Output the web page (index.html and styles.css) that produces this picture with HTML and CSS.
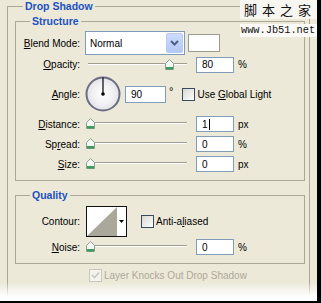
FILE: index.html
```
<!DOCTYPE html>
<html>
<head>
<meta charset="utf-8">
<link rel="stylesheet" href="styles.css">
</head>
<body>
<div class="screen">
  <fieldset class="group outer">
    <legend class="legend outer-legend">Drop Shadow</legend>

    <fieldset class="group inner structure">
      <legend class="legend inner-legend">Structure</legend>

      <div class="row row-blend">
        <span class="label"><u>B</u>lend Mode:</span>
        <div class="select">
          <span class="select-text">Normal</span>
          <span class="select-btn">
            <svg width="9" height="6" viewBox="0 0 9 6"><path d="M1 1 L4.5 4.5 L8 1" fill="none" stroke="#4d6185" stroke-width="2"/></svg>
          </span>
        </div>
        <span class="swatch"></span>
      </div>

      <div class="row row-opacity">
        <span class="label"><u>O</u>pacity:</span>
        <div class="slider">
          <span class="track"></span>
          <span class="thumb" style="left:79px">
            <svg width="9" height="11" viewBox="0 0 9 11"><path d="M0.5 10.5 V4.5 L4.5 0.5 L8.5 4.5 V10.5 Z" fill="#f3f8f3" stroke="#8aa08e"/><rect x="1" y="8" width="7" height="2.5" fill="#3f9a5e"/></svg>
          </span>
        </div>
        <span class="field">80</span>
        <span class="unit">%</span>
      </div>

      <div class="row row-angle">
        <span class="label"><u>A</u>ngle:</span>
        <svg class="dial" width="36" height="36" viewBox="0 0 36 36">
          <defs>
            <radialGradient id="dg" cx="50%" cy="50%" r="50%">
              <stop offset="0" stop-color="#ffffff"/>
              <stop offset="0.6" stop-color="#f2f2f4"/>
              <stop offset="1" stop-color="#e2e2e8"/>
            </radialGradient>
          </defs>
          <circle cx="18" cy="18" r="16.5" fill="url(#dg)" stroke="#6b6d82" stroke-width="2"/>
          <line x1="18" y1="18" x2="18" y2="1.5" stroke="#000" stroke-width="1.2"/>
          <circle cx="18" cy="18" r="1.8" fill="#000"/>
        </svg>
        <span class="field field-angle">90</span>
        <span class="deg">°</span>
        <span class="check"></span>
        <span class="check-label">Use <u>G</u>lobal Light</span>
      </div>

      <div class="row row-slide">
        <span class="label"><u>D</u>istance:</span>
        <div class="slider">
          <span class="track"></span>
          <span class="thumb" style="left:0px">
            <svg width="9" height="11" viewBox="0 0 9 11"><path d="M0.5 10.5 V4.5 L4.5 0.5 L8.5 4.5 V10.5 Z" fill="#f3f8f3" stroke="#8aa08e"/><rect x="1" y="8" width="7" height="2.5" fill="#3f9a5e"/></svg>
          </span>
        </div>
        <span class="field">1<span class="caret"></span></span>
        <span class="unit">px</span>
      </div>

      <div class="row row-slide">
        <span class="label">Sp<u>r</u>ead:</span>
        <div class="slider">
          <span class="track"></span>
          <span class="thumb" style="left:0px">
            <svg width="9" height="11" viewBox="0 0 9 11"><path d="M0.5 10.5 V4.5 L4.5 0.5 L8.5 4.5 V10.5 Z" fill="#f3f8f3" stroke="#8aa08e"/><rect x="1" y="8" width="7" height="2.5" fill="#3f9a5e"/></svg>
          </span>
        </div>
        <span class="field">0</span>
        <span class="unit">%</span>
      </div>

      <div class="row row-slide">
        <span class="label"><u>S</u>ize:</span>
        <div class="slider">
          <span class="track"></span>
          <span class="thumb" style="left:0px">
            <svg width="9" height="11" viewBox="0 0 9 11"><path d="M0.5 10.5 V4.5 L4.5 0.5 L8.5 4.5 V10.5 Z" fill="#f3f8f3" stroke="#8aa08e"/><rect x="1" y="8" width="7" height="2.5" fill="#3f9a5e"/></svg>
          </span>
        </div>
        <span class="field">0</span>
        <span class="unit">px</span>
      </div>
    </fieldset>

    <fieldset class="group inner quality">
      <legend class="legend inner-legend">Quality</legend>

      <div class="row row-contour">
        <span class="label">Contour:</span>
        <div class="contour">
          <svg width="30" height="29" viewBox="0 0 30 29"><rect width="30" height="29" fill="#fff"/><path d="M0 29 L30 0 L30 29 Z" fill="#aaa79b"/></svg>
          <span class="contour-btn">
            <svg width="5" height="3" viewBox="0 0 5 3"><path d="M0 0 H5 L2.5 3 Z" fill="#000"/></svg>
          </span>
        </div>
        <span class="check check-aa"></span>
        <span class="check-label">Anti-a<u>l</u>iased</span>
      </div>

      <div class="row row-noise">
        <span class="label"><u>N</u>oise:</span>
        <div class="slider">
          <span class="track"></span>
          <span class="thumb" style="left:0px">
            <svg width="9" height="11" viewBox="0 0 9 11"><path d="M0.5 10.5 V4.5 L4.5 0.5 L8.5 4.5 V10.5 Z" fill="#f3f8f3" stroke="#8aa08e"/><rect x="1" y="8" width="7" height="2.5" fill="#3f9a5e"/></svg>
          </span>
        </div>
        <span class="field">0</span>
        <span class="unit">%</span>
      </div>
    </fieldset>

    <div class="row row-knock">
      <span class="check check-disabled">
        <svg width="11" height="11" viewBox="0 0 11 11"><path d="M2 5 L4.5 7.5 L9 2.5" fill="none" stroke="#c8c6ba" stroke-width="1.6"/></svg>
      </span>
      <span class="check-label disabled">Layer Knocks Out Drop Shadow</span>
    </div>
  </fieldset>

  <div class="fade"></div>

  <div class="watermark">
    <span class="wm-cn">脚本之家</span>
    <span class="wm-url">www.Jb51.net</span>
  </div>
</div>
</body>
</html>
```

FILE: styles.css
```
* { box-sizing: border-box; }

html, body {
  margin: 0;
  padding: 0;
  background: #ece9d8;
}

body {
  font-family: "Liberation Sans", Arial, sans-serif;
  font-size: 10px;
  color: #000;
}

.screen {
  position: relative;
  width: 321px;
  height: 303px;
  overflow: hidden;
  background: #ece9d8;
  border-right: 4px solid #000;
  border-bottom: 2px solid #000;
  padding-left: 7px;
}

.group {
  margin: 0;
  border: 1px solid #aca899;
  min-width: 0;
}

.outer {
  width: 303px;
  height: 300px;
  border-bottom: none;
  padding: 0 4px 0 7px;
}

.inner {
  padding: 0 0 6px 0;
}

.structure {
  margin-top: 2px;
}

.quality {
  margin-top: 8px;
  padding-bottom: 7px;
}

.legend {
  font-weight: bold;
  color: #2152c3;
  padding: 0 2px;
  background: #ece9d8;
}

.outer-legend {
  font-size: 10.5px;
  line-height: 13px;
  margin-left: 8px;
}

.inner-legend {
  font-size: 10.5px;
  line-height: 12px;
  margin-left: 14px;
}

.row {
  display: flex;
  align-items: center;
  height: 20px;
  white-space: nowrap;
}

.label {
  width: 64px;
  text-align: right;
  margin-right: 6px;
  flex: none;
}

.row-blend { margin-top: 4px; height: 24px; }
.row-opacity { height: 19px; }
.row-angle { height: 40px; }
.row-contour { margin-top: 3px; height: 34px; }
.row-noise { height: 18px; }
.row-knock { margin-top: 5px; height: 13px; padding-left: 74px; }

/* select */
.select {
  display: flex;
  align-items: center;
  width: 100px;
  height: 24px;
  margin-left: -1px;
  background: #fff;
  border: 1px solid #7f9db9;
  padding: 1px;
}
.select-text {
  flex: 1;
  padding-left: 3px;
  font-size: 10px;
}
.select-btn {
  width: 17px;
  height: 20px;
  display: flex;
  align-items: center;
  justify-content: center;
  background: linear-gradient(#cddbfc, #b4c8f6);
  border: 1px solid #b9cbf2;
  border-radius: 2px;
}
.swatch {
  width: 32px;
  height: 18px;
  margin-left: 3px;
  background: #fff;
  border: 1px solid #9c9a8c;
}

/* slider */
.slider {
  position: relative;
  width: 104px;
  height: 12px;
  flex: none;
}
.track {
  position: absolute;
  left: 2px;
  right: 3px;
  top: 4px;
  height: 2px;
  border-top: 1px solid #a09e90;
  border-bottom: 1px solid #fff;
}
.thumb {
  position: absolute;
  top: 0;
  width: 9px;
  height: 11px;
  line-height: 0;
}

.field {
  display: flex;
  align-items: center;
  width: 38px;
  height: 16px;
  margin-left: 6px;
  padding-left: 5px;
  background: #fff;
  border: 1px solid #7f9db9;
  font-size: 10px;
}
.caret {
  display: inline-block;
  width: 1px;
  height: 11px;
  background: #000;
  margin-left: 1px;
}
.unit {
  margin-left: 4px;
}

/* angle */
.dial {
  margin-left: -1px;
  flex: none;
}
.field-angle {
  width: 41px;
  height: 17px;
  margin-left: 4px;
}
.deg {
  margin-left: 3px;
  font-size: 11px;
  align-self: center;
  margin-top: -6px;
}
.check {
  width: 13px;
  height: 13px;
  flex: none;
  border: 1px solid #3b4a60;
  background: linear-gradient(135deg, #d8d8d2, #ffffff);
  display: flex;
  align-items: center;
  justify-content: center;
}
.row-angle .check { margin-left: 9px; }
.check-label { margin-left: 2px; }

/* contour */
.contour {
  display: flex;
  width: 41px;
  height: 31px;
  border: 1px solid #111;
  flex: none;
  line-height: 0;
}
.contour-btn {
  flex: 1;
  background: #fff;
  display: flex;
  align-items: center;
  justify-content: center;
}
.check-aa { margin-left: 14px; }

/* disabled */
.check-disabled {
  border-color: #c9c7ba;
  background: #f4f3ee;
}
.disabled { color: #aca899; }

/* bottom fade */
.fade {
  position: absolute;
  left: 0;
  right: 0;
  top: 282px;
  bottom: 0;
  background: linear-gradient(rgba(255,255,255,0), #ffffff 80%);
}

/* watermark */
.watermark {
  position: absolute;
  top: 0;
  left: 240px;
  width: 77px;
  display: flex;
  flex-direction: column;
  align-items: stretch;
  white-space: nowrap;
}
.wm-cn {
  font-family: "Noto Sans CJK SC", sans-serif;
  font-size: 13px;
  line-height: 19px;
  letter-spacing: 5px;
  padding-left: 4px;
  background: #f7f6f1;
  color: #111;
}
.wm-url {
  margin-top: 5px;
  font-family: "Liberation Mono", monospace;
  font-size: 10.3px;
  line-height: 13px;
  padding: 0 1px;
  background: #fbfaf6;
  color: #111;
}
```
